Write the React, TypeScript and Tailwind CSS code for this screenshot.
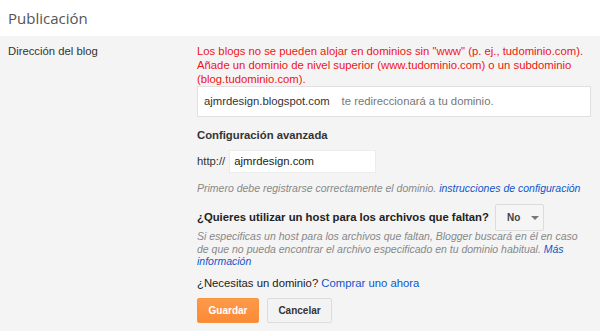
import React from "react";

export default function App() {
  return (
    <div className="w-[600px] h-[331px] overflow-hidden bg-[#f4f4f4] text-[11.3px] text-[#222]" style={{ fontFamily: '"Liberation Sans", Arial, sans-serif' }}>
      <div className="h-[36px] bg-white pl-[8px] flex items-center">
        <span className="text-[15px] text-[#555]" style={{ fontFamily: '"Open Sans", "Liberation Sans", sans-serif' }}>Publicación</span>
      </div>
      <div className="flex pt-[8px]">
        <div className="w-[197px] shrink-0 pl-[8px] leading-[14px] text-[#333]">Dirección del blog</div>
        <div className="flex-1 pr-[9px]">
          <div className="text-[#f01414] leading-[14px] whitespace-nowrap">
            Los blogs no se pueden alojar en dominios sin "www" (p. ej., tudominio.com).<br />
            Añade un dominio de nivel superior (www.tudominio.com) o un subdominio<br />
            (blog.tudominio.com).
          </div>
          <div className="h-[31px] bg-white border border-[#e0e0e0] flex items-center pl-[6px]">
            <span className="text-[#333]">ajmrdesign.blogspot.com</span>
            <span className="ml-[12px] text-[#777]">te redireccionará a tu dominio.</span>
          </div>
          <div className="mt-[10px] font-bold leading-[16px] text-[#333]">Configuración avanzada</div>
          <div className="mt-[7px] flex items-center gap-[4px]">
            <span className="text-[#333]">http://</span>
            <div className="w-[147px] h-[23px] bg-white border border-[#ececec] flex items-center pl-[4px] text-[#222]">ajmrdesign.com</div>
          </div>
          <div className="mt-[8px] text-[10.5px] italic leading-[15px] text-[#888] whitespace-nowrap">
            Primero debe registrarse correctamente el dominio. <span className="text-[#15c]">instrucciones de configuración</span>
          </div>
          <div className="mt-[8px] flex items-center gap-[6px]">
            <span className="font-bold text-[#222] whitespace-nowrap">¿Quieres utilizar un host para los archivos que faltan?</span>
            <div className="w-[49px] h-[27px] shrink-0 bg-[#f5f5f5] border border-[#dcdcdc] rounded-[2px] flex items-center pl-[11px] gap-[11px]">
              <span className="font-bold text-[10px] text-[#444]">No</span>
              <span className="w-0 h-0 border-l-[4px] border-r-[4px] border-t-[4px] border-l-transparent border-r-transparent border-t-[#777]"></span>
            </div>
          </div>
          <div className="mt-[-1px] text-[10.5px] italic leading-[12.5px] text-[#888] whitespace-nowrap">
            Si especificas un host para los archivos que faltan, Blogger buscará en él en caso<br />
            de que no pueda encontrar el archivo especificado en tu dominio habitual. <span className="text-[#15c]">Más</span><br />
            <span className="text-[#15c]">información</span>
          </div>
          <div className="mt-[8px] leading-[15px] text-[#222]">
            ¿Necesitas un dominio? <span className="text-[#15c]">Comprar uno ahora</span>
          </div>
          <div className="mt-[7px] flex gap-[8px]">
            <button className="w-[62px] h-[25px] rounded-[2px] bg-gradient-to-b from-[#fe9a4a] to-[#fb8a35] border border-[#f7923f] text-white font-bold text-[10px]">Guardar</button>
            <button className="w-[65px] h-[25px] rounded-[2px] bg-[#f3f3f3] border border-[#dcdcdc] text-[#333] font-bold text-[10px]">Cancelar</button>
          </div>
        </div>
      </div>
    </div>
  );
}
